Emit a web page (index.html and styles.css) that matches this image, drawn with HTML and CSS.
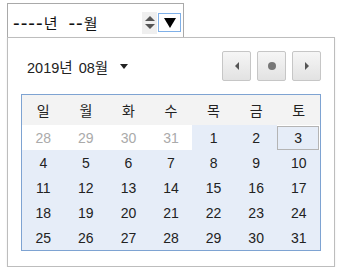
FILE: index.html
```html
<!DOCTYPE html>
<html lang="ko">
<head>
  <meta charset="UTF-8">
  <title>월 선택</title>
  <link rel="stylesheet" href="styles.css">
</head>
<body>
  <div class="page">
    <div class="month-input">
      <span class="field"><span class="dash">----</span>년</span>
      <span class="field field-month"><span class="dash">--</span>월</span>
      <span class="spinner">
        <span class="spin-up"></span>
        <span class="spin-down"></span>
      </span>
      <span class="drop-btn"><span class="drop-arrow"></span></span>
    </div>

    <div class="picker">
      <div class="picker-head">
        <div class="month-label">2019년 08월 <span class="label-arrow"></span></div>
        <div class="nav">
          <button class="nav-btn"><span class="tri-left"></span></button>
          <button class="nav-btn"><span class="dot"></span></button>
          <button class="nav-btn"><span class="tri-right"></span></button>
        </div>
      </div>

      <div class="calendar">
        <div class="week-head">
          <span>일</span><span>월</span><span>화</span><span>수</span><span>목</span><span>금</span><span>토</span>
        </div>
        <div class="days">
          <span class="day other">28</span>
          <span class="day other">29</span>
          <span class="day other">30</span>
          <span class="day other">31</span>
          <span class="day">1</span>
          <span class="day">2</span>
          <span class="day selected">3</span>
          <span class="day">4</span>
          <span class="day">5</span>
          <span class="day">6</span>
          <span class="day">7</span>
          <span class="day">8</span>
          <span class="day">9</span>
          <span class="day">10</span>
          <span class="day">11</span>
          <span class="day">12</span>
          <span class="day">13</span>
          <span class="day">14</span>
          <span class="day">15</span>
          <span class="day">16</span>
          <span class="day">17</span>
          <span class="day">18</span>
          <span class="day">19</span>
          <span class="day">20</span>
          <span class="day">21</span>
          <span class="day">22</span>
          <span class="day">23</span>
          <span class="day">24</span>
          <span class="day">25</span>
          <span class="day">26</span>
          <span class="day">27</span>
          <span class="day">28</span>
          <span class="day">29</span>
          <span class="day">30</span>
          <span class="day">31</span>
        </div>
      </div>
    </div>
  </div>
</body>
</html>
```

FILE: styles.css
```css
* {
  margin: 0;
  padding: 0;
  box-sizing: border-box;
}

body {
  font-family: 'Liberation Sans', 'Noto Sans CJK KR', sans-serif;
  background: #fff;
  color: #222;
}

.page {
  padding: 3px 0 0 7px;
}

/* input field */
.month-input {
  width: 177px;
  height: 34px;
  border: 1px solid #a9a9a9;
  border-bottom: none;
  display: flex;
  align-items: center;
  padding: 4px 2px 0 5px;
  font-size: 15px;
  color: #111;
}

.field {
  display: flex;
  align-items: center;
}

.field-month {
  margin-left: 11px;
}

.dash {
  font-size: 20px;
  letter-spacing: 1px;
  line-height: 20px;
}

.spinner {
  margin-left: auto;
  width: 15px;
  height: 22px;
  background: #efefef;
  display: flex;
  flex-direction: column;
  align-items: center;
  justify-content: center;
  gap: 3px;
}

.spin-up {
  width: 0;
  height: 0;
  border-left: 5px solid transparent;
  border-right: 5px solid transparent;
  border-bottom: 5px solid #555;
}

.spin-down {
  width: 0;
  height: 0;
  border-left: 5px solid transparent;
  border-right: 5px solid transparent;
  border-top: 5px solid #555;
}

.drop-btn {
  width: 23px;
  height: 19px;
  margin-left: 1px;
  border: 1px solid #7fb0e8;
  display: flex;
  align-items: center;
  justify-content: center;
}

.drop-arrow {
  width: 0;
  height: 0;
  border-left: 6px solid transparent;
  border-right: 6px solid transparent;
  border-top: 10px solid #000;
}

/* popup */
.picker {
  width: 328px;
  height: 230px;
  border: 1px solid #bdbdbd;
  padding: 13px 13px 0 13px;
  box-shadow: 0 1px 2px rgba(0, 0, 0, 0.08);
  background: #fff;
}

.picker-head {
  display: flex;
  justify-content: space-between;
  align-items: center;
  height: 30px;
  margin-bottom: 13px;
}

.month-label {
  padding-left: 6px;
  font-size: 14.5px;
  word-spacing: 2px;
  color: #222;
  display: flex;
  align-items: center;
}

.label-arrow {
  margin-left: 12px;
  width: 0;
  height: 0;
  border-left: 4px solid transparent;
  border-right: 4px solid transparent;
  border-top: 5px solid #222;
}

.nav {
  display: flex;
  gap: 6px;
}

.nav-btn {
  width: 29px;
  height: 30px;
  border: 1px solid #c6c6c6;
  border-radius: 2px;
  background: linear-gradient(#f6f6f6, #e2e2e2);
  display: flex;
  align-items: center;
  justify-content: center;
}

.tri-left {
  width: 0;
  height: 0;
  border-top: 4px solid transparent;
  border-bottom: 4px solid transparent;
  border-right: 4px solid #555;
}

.tri-right {
  width: 0;
  height: 0;
  border-top: 4px solid transparent;
  border-bottom: 4px solid transparent;
  border-left: 4px solid #555;
}

.dot {
  width: 8px;
  height: 8px;
  border-radius: 50%;
  background: #777;
}

/* calendar table */
.calendar {
  width: 300px;
  border: 1px solid #7ea3d2;
}

.week-head {
  display: grid;
  grid-template-columns: repeat(7, 1fr);
  height: 30px;
  background: #f3f3f3;
  font-size: 14px;
  color: #222;
}

.week-head span {
  display: flex;
  align-items: center;
  justify-content: center;
}

.days {
  display: grid;
  grid-template-columns: repeat(7, 1fr);
  grid-auto-rows: 25px;
  font-size: 14px;
}

.day {
  display: flex;
  align-items: center;
  justify-content: center;
  background: #e6edf8;
  color: #222;
}

.day.other {
  background: #fff;
  color: #aaa;
}

.day.selected {
  box-shadow: inset 0 0 0 1px #b4b4b4;
  margin: 1px 1px 0 0;
}
```
